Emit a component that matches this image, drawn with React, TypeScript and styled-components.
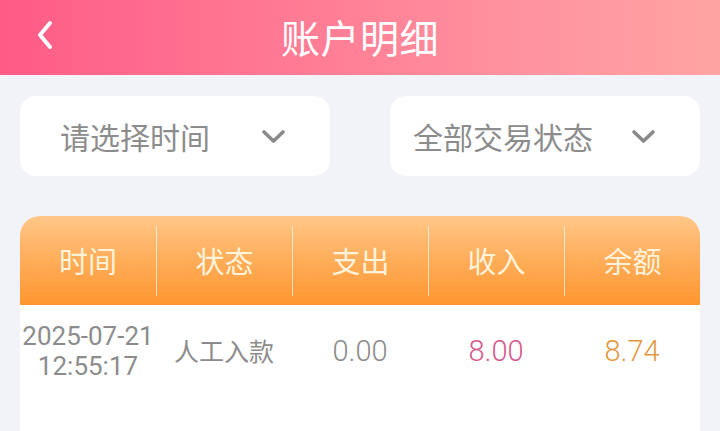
import React from 'react';
import styled, { createGlobalStyle } from 'styled-components';

const GlobalStyle = createGlobalStyle`
    html, body {
        margin: 0;
        padding: 0;
        overflow: hidden;
        background: #f2f3f8;
    }
    * { box-sizing: border-box; }
`;

const Page = styled.div`
    height: 100vh;
    display: flex;
    flex-direction: column;
    background: #f2f3f8;
    font-family: Roboto, "Noto Sans CJK SC", sans-serif;
`;

const TopBar = styled.header`
    height: 75px;
    flex-shrink: 0;
    display: grid;
    grid-template-columns: 1fr auto 1fr;
    align-items: center;
    padding: 0 28px;
    background: linear-gradient(90deg, #ff5b86 0%, #ff7a94 40%, #ff98a0 80%, #ffa3a2 100%);
`;

const BackButton = styled.button`
    justify-self: start;
    display: flex;
    align-items: center;
    padding: 0 8px;
    border: 0;
    background: none;
    margin-top: -6px;
`;

const Title = styled.h1`
    margin: 0;
    margin-top: -4px;
    font-family: "Noto Sans CJK SC", sans-serif;
    font-size: 39px;
    font-weight: 400;
    color: #fff;
    letter-spacing: 0.5px;
`;

const Filters = styled.div`
    display: grid;
    grid-template-columns: 1fr 1fr;
    gap: 60px;
    padding: 21px 20px 0;
`;

const Select = styled.div<{ inset: number; gap: number }>`
    height: 80px;
    display: flex;
    align-items: center;
    gap: ${ p => p.gap }px;
    padding-left: ${ p => p.inset }px;
    background: #fff;
    border-radius: 16px;
`;

const SelectLabel = styled.span`
    font-family: "Noto Sans CJK SC", sans-serif;
    font-size: 30px;
    font-weight: 400;
    color: #8c8c8c;
`;

const Table = styled.section`
    flex: 1;
    display: flex;
    flex-direction: column;
    margin: 40px 20px 0;
`;

const HeadRow = styled.div`
    height: 89px;
    display: grid;
    grid-template-columns: repeat(5, 1fr);
    align-items: center;
    border-radius: 20px 20px 0 0;
    background: linear-gradient(180deg, #ffc789 0%, #ffad59 50%, #ff9630 100%);
`;

const HeadCell = styled.div<{ divider?: boolean }>`
    height: 70px;
    display: flex;
    align-items: center;
    justify-content: center;
    border-left: ${ p => p.divider ? '1.5px solid rgba(255, 244, 225, 0.75)' : '0' };
    font-family: "Noto Sans CJK SC", sans-serif;
    font-size: 29px;
    font-weight: 400;
    color: #fff3dc;
    padding-bottom: 2px;
`;

const Body = styled.div`
    flex: 1;
    background: #fff;
`;

const DataRow = styled.div`
    height: 94px;
    display: grid;
    grid-template-columns: repeat(5, 1fr);
    align-items: center;
    text-align: center;
`;

const TimeCell = styled.div`
    font-size: 26px;
    line-height: 30px;
    color: #8c8c8c;
    margin-top: -2px;
`;

const StatusCell = styled.div`
    font-family: "Noto Sans CJK SC", sans-serif;
    font-size: 25px;
    font-weight: 400;
    color: #8c8c8c;
    margin-top: -4px;
`;

const Amount = styled.div<{ tone: string }>`
    font-size: 29px;
    font-weight: 300;
    color: ${ p => p.tone };
    margin-top: -2px;
`;

const Chevron = () => (
    <svg width="25" height="15" viewBox="0 0 25 15">
        <path d="M3 3 L12.5 12 L22 3" fill="none" stroke="#8a8a8a" strokeWidth="3.6" strokeLinecap="round" strokeLinejoin="round" />
    </svg>
);

const BackIcon = () => (
    <svg width="18" height="30" viewBox="0 0 18 30">
        <path d="M14 3 L4 15 L14 27" fill="none" stroke="#fff" strokeWidth="4" strokeLinecap="round" strokeLinejoin="round" />
    </svg>
);

const heads = [ '时间', '状态', '支出', '收入', '余额' ];

export default function App(): JSX.Element {
    return (
        <Page>
            <GlobalStyle />
            <TopBar>
                <BackButton><BackIcon /></BackButton>
                <Title>账户明细</Title>
                <span />
            </TopBar>
            <Filters>
                <Select inset={ 40 } gap={ 51 }>
                    <SelectLabel>请选择时间</SelectLabel>
                    <Chevron />
                </Select>
                <Select inset={ 23 } gap={ 38 }>
                    <SelectLabel>全部交易状态</SelectLabel>
                    <Chevron />
                </Select>
            </Filters>
            <Table>
                <HeadRow>
                    { heads.map( ( h, i ) => <HeadCell key={ h } divider={ i > 0 }>{ h }</HeadCell> ) }
                </HeadRow>
                <Body>
                    <DataRow>
                        <TimeCell>2025-07-21<br />12:55:17</TimeCell>
                        <StatusCell>人工入款</StatusCell>
                        <Amount tone='#8c8c8c'>0.00</Amount>
                        <Amount tone='#d65a8e'>8.00</Amount>
                        <Amount tone='#e3973f'>8.74</Amount>
                    </DataRow>
                </Body>
            </Table>
        </Page>
    );
}
